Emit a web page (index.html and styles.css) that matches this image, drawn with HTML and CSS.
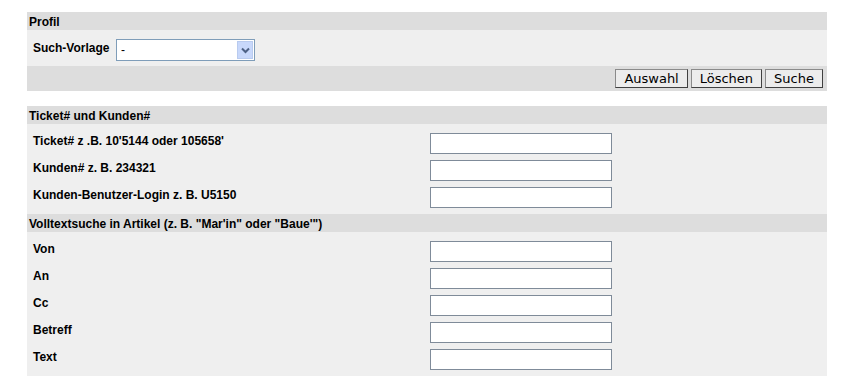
FILE: index.html
```html
<!DOCTYPE html>
<html lang="de">
<head>
    <meta charset="UTF-8">
    <title>Ticket-Suche</title>
    <link rel="stylesheet" href="styles.css">
</head>
<body>
    <form class="search" id="search-form">
        <div class="head">Profil</div>
        <div class="profile-row">
            <label for="profile">Such-Vorlage</label>
            <div class="select-wrap">
                <select id="profile" name="profile">
                    <option>-</option>
                </select>
                <span class="select-arrow">
                    <svg width="9" height="7" viewBox="0 0 9 7"><path d="M1 1.5 L4.5 5 L8 1.5" fill="none" stroke="#4d6185" stroke-width="2"/></svg>
                </span>
            </div>
        </div>
        <div class="actions">
            <button type="button">Auswahl</button>
            <button type="button">Löschen</button>
            <button type="submit">Suche</button>
        </div>

        <div class="head spaced">Ticket# und Kunden#</div>
        <div class="fields">
            <div class="field">
                <label for="ticket">Ticket# z .B. 10'5144 oder 105658'</label>
                <input type="text" id="ticket" name="ticket">
            </div>
            <div class="field">
                <label for="customer">Kunden# z. B. 234321</label>
                <input type="text" id="customer" name="customer">
            </div>
            <div class="field">
                <label for="login">Kunden-Benutzer-Login z. B. U5150</label>
                <input type="text" id="login" name="login">
            </div>
        </div>

        <div class="head">Volltextsuche in Artikel (z. B. "Mar'in" oder "Baue'")</div>
        <div class="fields">
            <div class="field">
                <label for="from">Von</label>
                <input type="text" id="from" name="from">
            </div>
            <div class="field">
                <label for="to">An</label>
                <input type="text" id="to" name="to">
            </div>
            <div class="field">
                <label for="cc">Cc</label>
                <input type="text" id="cc" name="cc">
            </div>
            <div class="field">
                <label for="subject">Betreff</label>
                <input type="text" id="subject" name="subject">
            </div>
            <div class="field">
                <label for="body">Text</label>
                <input type="text" id="body" name="body">
            </div>
        </div>
    </form>
</body>
</html>
```

FILE: styles.css
```css
body {
    margin: 0;
    padding: 0;
    background-color: #fff;
    font-family: "Liberation Sans", Arial, sans-serif;
    font-size: 12px;
    color: #000;
}
.search {
    width: 800px;
    margin: 12px 0 0 27px;
}
.head {
    height: 18px;
    padding: 2px 0 0 2px;
    box-sizing: border-box;
    line-height: 16px;
    font-weight: bold;
    background-color: #dddddd;
}
.head.spaced {
    margin-top: 15px;
}
label {
    font-weight: bold;
    line-height: 14px;
}
.profile-row {
    display: flex;
    align-items: flex-start;
    height: 36px;
    padding: 9px 0 0 6px;
    box-sizing: border-box;
    background-color: #efefef;
}
.profile-row label {
    width: 83px;
    margin-top: 2px;
}
.select-wrap {
    position: relative;
    width: 139px;
    height: 22px;
}
.select-wrap select {
    appearance: none;
    width: 100%;
    height: 100%;
    margin: 0;
    padding: 0 0 0 4px;
    border: 1px solid #7f9db9;
    border-radius: 0;
    background-color: #fff;
    font-family: "Liberation Sans", Arial, sans-serif;
    font-size: 12px;
    color: #000;
}
.select-arrow {
    position: absolute;
    top: 2px;
    right: 2px;
    width: 16px;
    height: 18px;
    display: flex;
    align-items: center;
    justify-content: center;
    box-sizing: border-box;
    border: 1px solid #b9cbef;
    background-color: #c8d8fb;
    pointer-events: none;
}
.actions {
    display: flex;
    justify-content: flex-end;
    align-items: center;
    gap: 3px;
    height: 25px;
    padding-right: 4px;
    background-color: #dddddd;
}
.actions button {
    height: 19px;
    margin: 0;
    padding: 0 8px;
    border: 1px solid;
    border-color: #8a8a8a #404040 #404040 #8a8a8a;
    border-radius: 0;
    background-color: #ececec;
    font-family: "DejaVu Sans", Verdana, sans-serif;
    font-size: 13px;
    line-height: 17px;
    color: #000;
}
.fields {
    padding: 6px 0 3px 0;
    background-color: #efefef;
}
.field {
    display: flex;
    align-items: flex-start;
    height: 27px;
}
.field label {
    width: 397px;
    padding: 4px 0 0 6px;
}
.field input {
    width: 182px;
    height: 21px;
    margin: 3px 0 0 0;
    padding: 0 3px;
    box-sizing: border-box;
    border: 1px solid #7f8b99;
    background-color: #fff;
    font-family: "Liberation Sans", Arial, sans-serif;
    font-size: 12px;
}
```
